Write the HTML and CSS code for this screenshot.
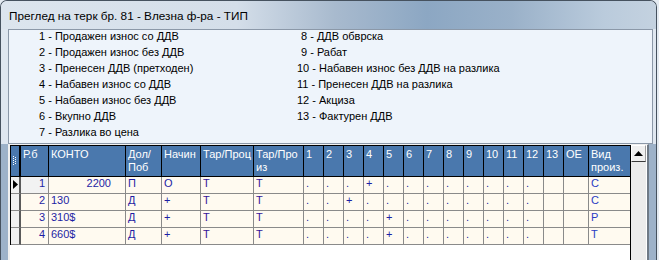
FILE: index.html
```html
<!DOCTYPE html>
<html>
<head>
<meta charset="utf-8">
<link rel="stylesheet" href="styles.css">
</head>
<body>
<div class="window">
  <div class="titlebar">Преглед на терк бр. 81 - Влезна ф-ра - ТИП</div>
  <div class="upper">
    <div class="legend">
      <div class="col">
        <div>1 - Продажен износ со ДДВ</div>
        <div>2 - Продажен износ без ДДВ</div>
        <div>3 - Пренесен ДДВ (претходен)</div>
        <div>4 - Набавен износ со ДДВ</div>
        <div>5 - Набавен износ без ДДВ</div>
        <div>6 - Вкупно ДДВ</div>
        <div>7 - Разлика во цена</div>
      </div>
      <div class="col">
        <div class="pad">8 - ДДВ обврска</div>
        <div class="pad">9 - Рабат</div>
        <div>10 - Набавен износ без ДДВ на разлика</div>
        <div>11 - Пренесен ДДВ на разлика</div>
        <div>12 - Акциза</div>
        <div>13 - Фактурен ДДВ</div>
      </div>
    </div>
  </div>
  <div class="lower">
    <div class="gridbox">
      <div class="grid">
        <div class="h ind"><svg class="grip" width="4" height="9" viewBox="0 0 4 9"><g fill="#fff"><rect x="0" y="0" width="1" height="1"/><rect x="2" y="1" width="1" height="1"/><rect x="0" y="2" width="1" height="1"/><rect x="2" y="3" width="1" height="1"/><rect x="0" y="4" width="1" height="1"/><rect x="2" y="5" width="1" height="1"/><rect x="0" y="6" width="1" height="1"/><rect x="2" y="7" width="1" height="1"/><rect x="0" y="8" width="1" height="1"/></g></svg></div>
        <div class="h">Р.б</div>
        <div class="h">КОНТО</div>
        <div class="h">Дол/<br>Поб</div>
        <div class="h">Начин</div>
        <div class="h">Тар/Проц</div>
        <div class="h">Тар/Про<br>из</div>
        <div class="h">1</div><div class="h">2</div><div class="h">3</div><div class="h">4</div><div class="h">5</div><div class="h">6</div><div class="h">7</div><div class="h">8</div><div class="h">9</div><div class="h">10</div><div class="h">11</div><div class="h">12</div><div class="h">13</div>
        <div class="h">ОЕ</div>
        <div class="h">Вид<br>произ.</div>

        <div class="c ind"><svg class="arrow" width="5" height="9" viewBox="0 0 5 9"><polygon points="0,0 5,4.5 0,9" fill="#000"/></svg></div>
        <div class="c num cur">1</div>
        <div class="c kr">2200</div>
        <div class="c">П</div>
        <div class="c">О</div>
        <div class="c t">Т</div>
        <div class="c t">Т</div>
        <div class="c">.</div><div class="c">.</div><div class="c">.</div><div class="c">+</div><div class="c">.</div><div class="c">.</div><div class="c">.</div><div class="c">.</div><div class="c">.</div><div class="c">.</div><div class="c">.</div><div class="c">.</div><div class="c"></div>
        <div class="c"></div>
        <div class="c v">С</div>

        <div class="c ind"></div>
        <div class="c num">2</div>
        <div class="c">130</div>
        <div class="c">Д</div>
        <div class="c">+</div>
        <div class="c t">Т</div>
        <div class="c t">Т</div>
        <div class="c">.</div><div class="c">.</div><div class="c">+</div><div class="c">.</div><div class="c">.</div><div class="c">.</div><div class="c">.</div><div class="c">.</div><div class="c">.</div><div class="c">.</div><div class="c">.</div><div class="c">.</div><div class="c"></div>
        <div class="c"></div>
        <div class="c v">С</div>

        <div class="c ind"></div>
        <div class="c num">3</div>
        <div class="c">310$</div>
        <div class="c">Д</div>
        <div class="c">+</div>
        <div class="c t">Т</div>
        <div class="c t">Т</div>
        <div class="c">.</div><div class="c">.</div><div class="c">.</div><div class="c">.</div><div class="c">+</div><div class="c">.</div><div class="c">.</div><div class="c">.</div><div class="c">.</div><div class="c">.</div><div class="c">.</div><div class="c">.</div><div class="c"></div>
        <div class="c"></div>
        <div class="c v">Р</div>

        <div class="c ind"></div>
        <div class="c num">4</div>
        <div class="c">660$</div>
        <div class="c">Д</div>
        <div class="c">+</div>
        <div class="c t">Т</div>
        <div class="c t">Т</div>
        <div class="c">.</div><div class="c">.</div><div class="c">.</div><div class="c">.</div><div class="c">+</div><div class="c">.</div><div class="c">.</div><div class="c">.</div><div class="c">.</div><div class="c">.</div><div class="c">.</div><div class="c">.</div><div class="c"></div>
        <div class="c"></div>
        <div class="c v">Т</div>
      </div>
      <div class="vscroll">
        <div class="upbtn"><svg width="9" height="5" viewBox="0 0 9 5"><polygon points="0,5 4.5,0 9,5" fill="#000"/></svg></div>
      </div>
    </div>
  </div>
</div>
</body>
</html>
```

FILE: styles.css
```css
* { box-sizing: border-box; }

body {
  margin: 0;
  background: #e4ebf2;
  font-family: "Liberation Sans", Arial, sans-serif;
  font-size: 11px;
  color: #000;
}

.window {
  width: 657px;
  height: 260px;
  border: 1px solid #46525f;
  border-bottom: none;
  border-radius: 7px 7px 0 0;
  background: #dfe7f0;
  overflow: hidden;
  display: flex;
  flex-direction: column;
}

.titlebar {
  height: 28px;
  flex: none;
  display: flex;
  align-items: center;
  padding-left: 8px;
  padding-top: 1px;
  font-size: 11.75px;
  color: #000;
  background: linear-gradient(to right, #dce5ee 0%, #d4dee9 36%, #a8bace 51%, #8ca7c3 65%, #9ab1c9 78%, #bacbdc 92%, #c4d2e0 100%);
}

.upper {
  flex: none;
  padding: 0 3px 0 7px;
}

.legend {
  height: 115px;
  border: 1px solid #8b98a8;
  background: #eef4fb;
  display: grid;
  grid-template-columns: 258px 1fr;
  padding-left: 30px;
  line-height: 16px;
  overflow: hidden;
}

.col {
  margin-top: -2px;
}

.pad {
  padding-left: 4px;
}

.lower {
  flex: 1;
  display: flex;
  background: #9db2c9;
  padding: 0 7px;
}

.gridbox {
  width: 641px;
  display: flex;
  align-items: stretch;
  background: #fff;
  border-left: 2px solid #f0f0f0;
  border-top: 1px solid #f0f0f0;
  border-right: 2px solid #6f7a86;
}

.grid {
  width: 621px;
  align-self: flex-start;
  display: grid;
  grid-template-columns: 10px 28px 77px 36px 39px 53px 50px repeat(13, 20px) 25px 42px;
  grid-template-rows: 31px repeat(4, 17px);
  border-left: 1px solid #000;
  border-top: 1px solid #000;
}

.h {
  background: #4a78ad;
  color: #fff;
  border-right: 1px solid #000;
  border-bottom: 1px solid #000;
  padding: 2px 0 0 2px;
  line-height: 13px;
  white-space: nowrap;
  overflow: hidden;
}

.h.ind {
  border-right: 2px solid #000;
  padding: 10px 0 0 2px;
}

.grip { display: block; }

.c {
  background: #fffaf0;
  border-right: 1px solid #8a8a8a;
  border-bottom: 1px solid #8a8a8a;
  padding-left: 2px;
  line-height: 13px;
  color: #1e1ea4;
  white-space: nowrap;
  overflow: hidden;
}

.c.ind {
  background: #f0f0f0;
  border-right: 2px solid #5a5a5a;
  padding: 3px 0 0 2px;
}

.arrow { display: block; }

.c.num {
  text-align: right;
  padding-right: 3px;
}

.c.cur {
  background: #f2f2f2;
}

.c.kr {
  text-align: right;
  padding-right: 14px;
}

.c.t { color: #36169a; }
.c.v { color: #2a3cc4; }

.vscroll {
  width: 16px;
  background: #ececec;
  border-left: 1px solid #000;
  margin-left: -1px;
}

.upbtn {
  height: 17px;
  background: #f0f0f0;
  border-top: 1px solid #fff;
  border-left: 1px solid #fff;
  border-bottom: 1px solid #3a3a3a;
  border-right: 1px solid #a0a0a0;
  display: flex;
  align-items: center;
  justify-content: center;
}

.upbtn svg { display: block; }
```
